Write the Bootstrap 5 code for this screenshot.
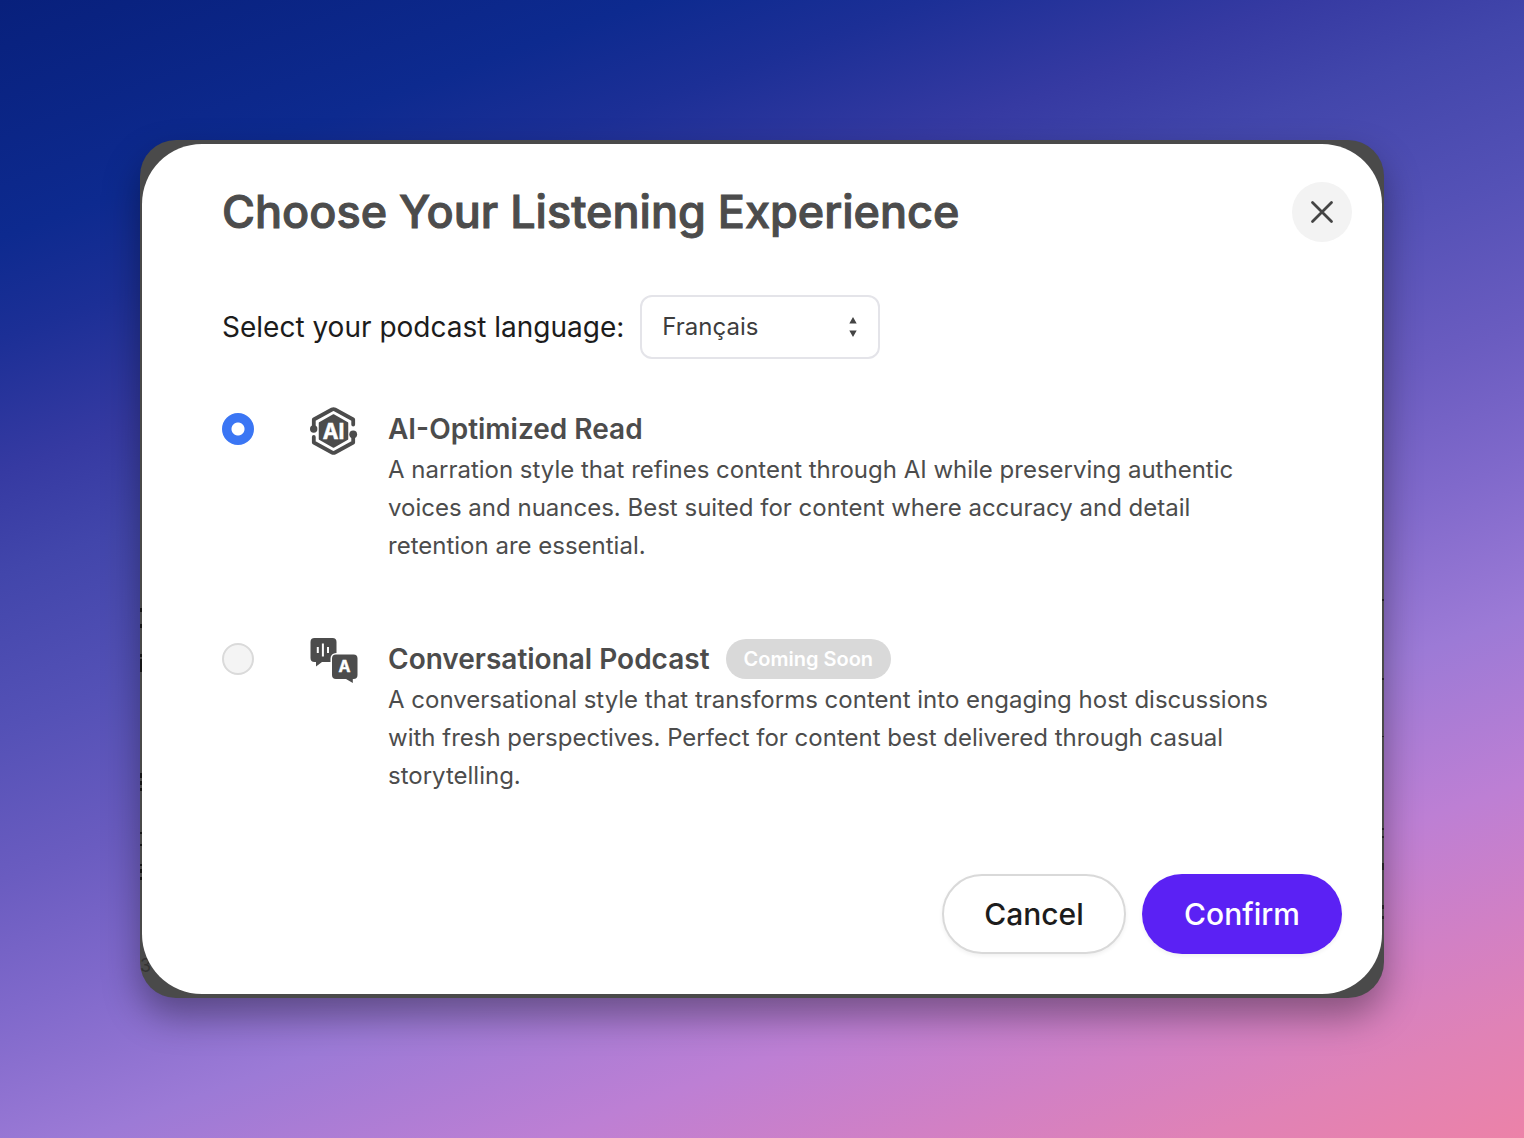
<!DOCTYPE html>
<html lang="en">
<head>
<meta charset="utf-8">
<meta name="viewport" content="width=device-width, initial-scale=1">
<title>Choose Your Listening Experience</title>
<link href="https://cdn.jsdelivr.net/npm/bootstrap@5.3.0/dist/css/bootstrap.min.css" rel="stylesheet">
<style>
  :root { --ink: #4c4c4c; --edge: #4a4a4a; }
  body {
    font-family: Inter, "Liberation Sans", sans-serif;
    color: var(--ink);
    background: linear-gradient(160deg, #08207c 0%, #0d2a8f 14%, #1c2f96 20%, #363aa2 28%, #4246ab 34%, #5451b6 43%, #6a5cc0 52%, #8069cb 60%, #9c7ad6 69%, #bd7fd4 79%, #d280c4 87%, #e082b6 93%, #ec82a8 100%);
  }
  .stage { padding: 140px; }
  .window-frame {
    background: var(--edge);
    border-radius: 36px;
    padding: 4px 2px;
    box-shadow: 0 18px 36px rgba(0,0,0,.36);
  }
  .sheet { border-radius: 60px; padding: 38px 30px 40px 80px; }
  .sheet-title { font-size: 45px; line-height: 60px; font-weight: 500; -webkit-text-stroke: 1px currentColor; }
  .close-round { width: 60px; height: 60px; background: #f3f3f3; color: #444; }
  .language-row { margin-top: 53px; gap: 16px; }
  .language-row label { font-size: 28px; line-height: 40px; color: #1c1c1c; }
  .language-box { width: 240px; }
  .language-box select {
    height: 64px; border: 2px solid #e4e4e9; border-radius: 12px;
    padding: 0 20px; font-size: 24px; color: #3d3d3d; background-image: none;
  }
  .language-box svg { right: 22px; }
  .choice { margin-top: 50px; padding-right: 70px; }
  .choice + .choice { margin-top: 74px; }
  .choice .form-check-input {
    width: 32px; height: 32px; margin: 4px 0 0;
    background-color: #f4f4f4; border: 2px solid #dadada;
  }
  .choice .form-check-input:checked {
    background-color: #3b76f4; border-color: #3b76f4;
    background-image: radial-gradient(circle, #fff 6px, transparent 7px);
  }
  .choice-icon { width: 48px; height: 48px; margin: -2px 30px 0 56px; font-weight: 700; }
  .choice-title { font-size: 28px; line-height: 40px; font-weight: 600; }
  .choice-text { font-size: 24px; line-height: 38px; margin: 2px 0 0; }
  .soon-pill { background: #d9d9d9; font-size: 20px; line-height: 40px; font-weight: 600; padding: 0 18px; }
  .actions { margin-top: 79px; padding-right: 10px; gap: 16px; }
  .actions .btn { height: 80px; font-size: 30px; font-weight: 500; box-shadow: 0 2px 4px rgba(0,0,0,.06); padding: 0; }
  .btn-cancel { width: 184px; border: 2px solid #d9d9d9; color: #1c1c1c; background: #fff; }
  .btn-confirm { width: 200px; background: #5b21f4; color: #fff; }
  .behind { top: 0; width: 2px; height: 100%; }
  .behind-digit { left: 0; bottom: 22px; font-size: 18px; line-height: 20px; color: #333; }
</style>
</head>
<body class="min-vh-100">
<main class="stage">
  <div class="window-frame position-relative">
    <div aria-hidden="true">
      <span class="behind-digit position-absolute">3</span>
      <svg class="behind position-absolute start-0" fill="#161616"><path d="M0 468h2v4H0zM0 484h2v4H0zM0 514h2v3H0zM0 519h2v13H0zM0 633h2v5H0zM0 641h2v4H0zM0 648h2v3H0zM0 692h2v2H0zM0 704h2v2H0zM0 724h2v2H0zM0 729h2v4H0zM0 737h2v3H0z"/></svg>
      <svg class="behind position-absolute end-0" fill="#242424"><path d="M0 459h2v2H0zM0 538h2v2H0zM0 596h2v1H0zM0 688h2v2H0zM0 696h2v2H0zM0 723h2v7H0zM0 765h2v4H0zM0 776h2v3H0z"/></svg>
    </div>
    <section class="sheet bg-white position-relative" role="dialog" aria-labelledby="sheet-title">
      <header class="d-flex justify-content-between align-items-center">
        <h1 class="sheet-title mb-0" id="sheet-title">Choose Your Listening Experience</h1>
        <button type="button" class="close-round btn rounded-circle p-0 border-0 d-flex align-items-center justify-content-center" aria-label="Close">
          <svg width="24" height="24" viewBox="0 0 24 24" fill="none" stroke="currentColor" stroke-width="2.800" stroke-linecap="round"><path d="M2.500 2.500l19 19M21.500 2.500l-19 19"/></svg>
        </button>
      </header>

      <form>
        <div class="language-row d-flex align-items-center">
          <label for="language">Select your podcast language:</label>
          <div class="language-box position-relative">
            <select class="form-select" id="language">
              <option selected>Français</option>
              <option>English</option>
            </select>
            <svg class="position-absolute top-50 translate-middle-y pe-none" width="10" height="20" viewBox="0 0 10 20" fill="#444" aria-hidden="true"><path d="M5 0l3.700 6.500H1.300zM5 20l3.700-6.500H1.300z"/></svg>
          </div>
        </div>

        <div class="choice d-flex align-items-start">
          <input class="form-check-input flex-shrink-0" type="radio" name="style" id="style-read" checked>
          <svg class="choice-icon flex-shrink-0" viewBox="0 0 48 48" aria-hidden="true">
            <path d="M23.500 8l14 8v16l-14 8-14-8V16z" fill="#4c4c4c" stroke="#4c4c4c" stroke-width="1.500" stroke-linejoin="round"/>
            <g fill="none" stroke="#4c4c4c" stroke-width="3.800" stroke-linejoin="round" stroke-linecap="round">
              <path d="M3.800 19v-6.500L22 2.500q1.500-.8 3 0L43.200 12.500V17.500"/>
              <path d="M43.200 29v6.500L25 45.500q-1.500.8-3 0L3.800 35.500V30"/>
            </g>
            <circle cx="3.700" cy="22" r="3.700" fill="#4c4c4c"/><circle cx="43.200" cy="27.300" r="3.900" fill="#4c4c4c"/>
            <text x="23.500" y="32" text-anchor="middle" font-size="21" fill="#fff" stroke="#fff" stroke-width=".5">AI</text>
          </svg>
          <div>
            <label class="choice-title d-block" for="style-read">AI-Optimized Read</label>
            <p class="choice-text">A narration style that refines content through AI while preserving authentic voices and nuances. Best suited for content where accuracy and detail retention are essential.</p>
          </div>
        </div>

        <div class="choice d-flex align-items-start">
          <input class="form-check-input flex-shrink-0" type="radio" name="style" id="style-talk">
          <svg class="choice-icon flex-shrink-0" viewBox="0 1 48 48" aria-hidden="true">
            <path d="M4.500 2h18a4 4 0 0 1 4 4v16a4 4 0 0 1-4 4H12l-6 4.500V26H4.500a4 4 0 0 1-4-4V6a4 4 0 0 1 4-4z" fill="#4c4c4c"/>
            <path d="M7.800 11v6M12.900 7.500v13M18 11v6" stroke="#fff" stroke-width="2"/>
            <path d="M26 18.500h17.500a4 4 0 0 1 4 4V39a4 4 0 0 1-4 4h-.7v4L36 43H26a4 4 0 0 1-4-4V22.500a4 4 0 0 1 4-4z" fill="#4c4c4c" stroke="#fff" stroke-width="3" paint-order="stroke"/>
            <text x="34.500" y="36" text-anchor="middle" font-size="16" fill="#fff" stroke="#fff" stroke-width=".4">A</text>
          </svg>
          <div>
            <div class="d-flex align-items-center gap-3">
              <label class="choice-title" for="style-talk">Conversational Podcast</label>
              <span class="soon-pill rounded-pill text-white">Coming Soon</span>
            </div>
            <p class="choice-text">A conversational style that transforms content into engaging host discussions with fresh perspectives. Perfect for content best delivered through casual storytelling.</p>
          </div>
        </div>

        <div class="actions d-flex justify-content-end">
          <button type="button" class="btn btn-cancel rounded-pill">Cancel</button>
          <button type="submit" class="btn btn-confirm rounded-pill">Confirm</button>
        </div>
      </form>
    </section>
  </div>
</main>
<script src="https://cdn.jsdelivr.net/npm/bootstrap@5.3.0/dist/js/bootstrap.bundle.min.js"></script>
</body>
</html>
